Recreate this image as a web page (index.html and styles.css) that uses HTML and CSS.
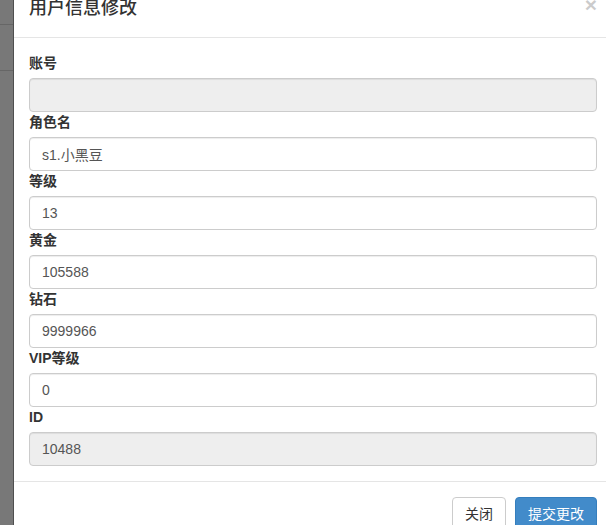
FILE: index.html
```html
<!DOCTYPE html>
<html lang="zh">
<head>
<meta charset="utf-8">
<title>用户信息修改</title>
<link rel="stylesheet" href="styles.css">
</head>
<body>
<div class="backdrop">
  <div class="bg-row r1"></div>
  <div class="bg-row r2"></div>
</div>
<div class="modal">
  <div class="modal-header">
    <button class="close" type="button">×</button>
    <h4 class="modal-title">用户信息修改</h4>
  </div>
  <form class="modal-body">
    <label class="lbl">账号</label>
    <input class="form-control" type="text" value="" disabled>
    <label class="lbl">角色名</label>
    <input class="form-control" type="text" value="s1.小黑豆">
    <label class="lbl">等级</label>
    <input class="form-control" type="text" value="13">
    <label class="lbl">黄金</label>
    <input class="form-control" type="text" value="105588">
    <label class="lbl">钻石</label>
    <input class="form-control" type="text" value="9999966">
    <label class="lbl">VIP等级</label>
    <input class="form-control" type="text" value="0">
    <label class="lbl">ID</label>
    <input class="form-control" type="text" value="10488" disabled>
  </form>
  <div class="modal-footer">
    <button class="btn btn-default" type="button">关闭</button>
    <button class="btn btn-primary" type="button">提交更改</button>
  </div>
</div>
</body>
</html>
```
FILE: styles.css
```css
html, body {
  margin: 0;
  padding: 0;
  height: 525px;
  overflow: hidden;
}
body {
  display: flex;
  align-items: flex-start;
  background: #777;
  font-family: "Liberation Sans", "Noto Sans CJK SC", sans-serif;
  font-size: 14px;
  line-height: 1.42857;
  color: #333;
}
.backdrop {
  width: 13px;
  flex-shrink: 0;
  height: 525px;
  background: #787878;
  display: flex;
  flex-direction: column;
}
.bg-row {
  border-bottom: 1px solid #666;
}
.r1 { height: 24px; }
.r2 { height: 45px; }
.modal {
  width: 600px;
  flex-shrink: 0;
  box-sizing: border-box;
  margin-top: -19px;
  background: #fff;
  border-left: 1px solid #4f4f4f;
  border-right: 1px solid #999;
}
.modal-header {
  padding: 15px;
  border-bottom: 1px solid #e5e5e5;
}
.modal-title {
  margin: 0;
  font-size: 18px;
  font-weight: 500;
  line-height: 1.42857;
  color: #333;
}
.close {
  float: right;
  margin-top: -2px;
  padding: 0;
  border: 0;
  background: transparent;
  font-family: "Liberation Sans", sans-serif;
  font-size: 21px;
  font-weight: bold;
  line-height: 1;
  color: #000;
  opacity: 0.2;
}
.modal-body {
  padding: 15px;
  margin: 0;
  display: flex;
  flex-direction: column;
}
.lbl {
  display: block;
  font-weight: bold;
  line-height: 20px;
  height: 20px;
  margin-bottom: 5px;
  color: #333;
}
.form-control {
  display: block;
  box-sizing: border-box;
  width: 100%;
  height: 34px;
  margin: 0;
  padding: 6px 12px;
  font-family: "Liberation Sans", "Noto Sans CJK SC", sans-serif;
  font-size: 14px;
  line-height: 20px;
  color: #555;
  background: #fff;
  border: 1px solid #ccc;
  border-radius: 4px;
  box-shadow: inset 0 1px 1px rgba(0,0,0,.075);
  outline: none;
}
.form-control:disabled {
  background: #eee;
  color: #555;
  -webkit-text-fill-color: #555;
  opacity: 1;
}
.modal-footer {
  padding: 15px;
  border-top: 1px solid #e5e5e5;
  text-align: right;
}
.btn {
  display: inline-block;
  box-sizing: border-box;
  height: 34px;
  margin: 0;
  padding: 6px 12px;
  font-family: "Liberation Sans", "Noto Sans CJK SC", sans-serif;
  font-size: 14px;
  line-height: 20px;
  border: 1px solid transparent;
  border-radius: 4px;
  vertical-align: middle;
}
.btn + .btn {
  margin-left: 5px;
}
.btn-default {
  color: #333;
  background: #fff;
  border-color: #ccc;
}
.btn-primary {
  color: #fff;
  background: #428bca;
  border-color: #357ebd;
}
```
